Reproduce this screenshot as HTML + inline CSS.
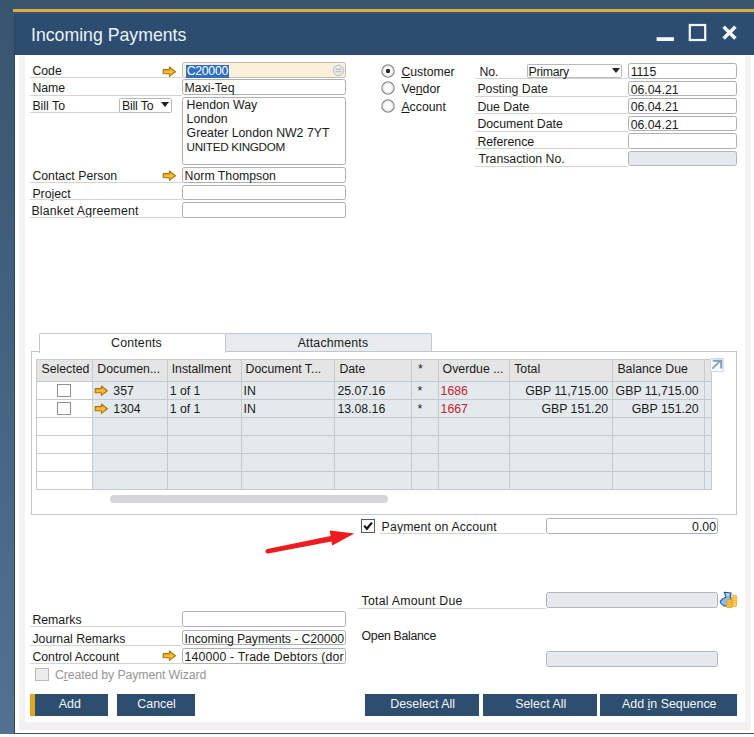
<!DOCTYPE html>
<html lang="en">
<head>
<meta charset="utf-8">
<title>Incoming Payments</title>
<style>
html,body{margin:0;padding:0;}
body{width:754px;height:737px;position:relative;overflow:hidden;background:#fff;
  font-family:"Liberation Sans","DejaVu Sans",sans-serif;font-size:12.3px;color:#1a1a1a;}
.abs,.lbl,.fld,.ul,.btn,.cell,.hd,.txt{position:absolute;box-sizing:border-box;white-space:nowrap;}
/* frame */
#topband{left:0;top:0;width:754px;height:15px;background:#39566f;}
#leftband{left:0;top:0;width:15px;height:734px;background:linear-gradient(#38556e 0px,#44637f 360px,#537292 734px);}
#leftline{left:14px;top:14px;width:1px;height:720px;background:#2e465c;}
#gold{left:13.4px;top:9.2px;width:741px;height:3.1px;background:#dcaa40;}
#title{left:14px;top:13.6px;width:740px;height:41px;background:#2d4d70;}
#titletxt{left:31px;top:24px;font-size:17.7px;line-height:22px;color:#edf2f8;}
#botline{left:14px;top:732.6px;width:740px;height:1.6px;background:#3a4f66;}
.band{background:#f3f3f4;}
/* generic */
.lbl{height:16px;line-height:16px;}
.ul{height:1px;background:#d4d4d4;}
.fld{border:1px solid #adb1b6;border-radius:2.5px;background:#fff;height:15.6px;line-height:14px;padding-left:1.5px;padding-top:.9px;}
.clip{overflow-x:clip;overflow-y:visible;}
.fld.dis{background:#e5e9ed;border-color:#b4b8bd;}
.btn{background:#2e4e70;color:#f2f5f9;text-align:center;height:21.5px;line-height:21.5px;top:694.2px;font-size:12.4px;padding-left:1.2px;}
u{text-decoration:underline;text-underline-offset:.6px;text-decoration-thickness:1px;}
.tri{position:absolute;width:0;height:0;border-left:4.5px solid transparent;border-right:4.5px solid transparent;border-top:5.4px solid #222;}
/* table */
.hd{background:#e5e5e5;height:22px;line-height:20px;top:359.2px;padding-left:4px;border-left:1px solid #c6cacf;overflow:hidden;}
.cell{background:#e4e9ee;height:18px;line-height:17px;padding-top:1px;border-left:1px solid #c6cacf;border-top:1px solid #c6cacf;padding-left:2px;overflow:hidden;}
.cell.w{background:#fff;}
.cell.r{text-align:right;padding-right:2px;padding-left:0;}
.red{color:#c9212b;}
.cb{position:absolute;box-sizing:border-box;width:13.4px;height:13px;border:1px solid #8e9296;background:#fff;}
.radio{position:absolute;box-sizing:border-box;width:13.6px;height:13.6px;border:1px solid #8c8c8c;border-radius:50%;background:#fff;}
</style>
</head>
<body>
<!-- window frame -->
<div class="abs" id="topband"></div>
<div class="abs" id="leftband"></div>
<div class="abs" id="title"></div>
<div class="abs" id="leftline"></div>
<div class="abs" id="gold"></div>
<div class="abs" id="titletxt">Incoming Payments</div>
<svg class="abs" style="left:650px;top:18px" width="95" height="30" viewBox="650 18 95 30">
  <rect x="656.6" y="37.2" width="17.4" height="3.8" fill="#f4f7fa"/>
  <rect x="689.8" y="25" width="15.4" height="15" fill="none" stroke="#f4f7fa" stroke-width="2.2"/>
  <path d="M723.6 26.8 L735.4 38.6 M735.4 26.8 L723.6 38.6" stroke="#f4f7fa" stroke-width="3.5" fill="none"/>
</svg>
<div class="abs band" style="left:19px;top:56px;width:6px;height:674px"></div>
<div class="abs band" style="left:745px;top:56px;width:6px;height:674px"></div>
<div class="abs band" style="left:19px;top:722.4px;width:732px;height:7.8px;background:#f1f1f3"></div>
<div class="abs" id="botline"></div>

<!-- BEGIN:topleft -->
<!-- top-left form -->
<div class="lbl" style="left:32.4px;top:63.4px">Code</div>
<div class="lbl" style="left:32.4px;top:79.6px">Name</div>
<div class="lbl" style="left:32.4px;top:97.8px">Bill To</div>
<div class="lbl" style="left:32.4px;top:167.9px">Contact Person</div>
<div class="lbl" style="left:32.4px;top:185.5px">Project</div>
<div class="lbl" style="left:31.4px;top:202.8px;letter-spacing:.2px">Blanket Agreement</div>
<div class="ul" style="left:30px;top:77.4px;width:152px"></div>
<div class="ul" style="left:30px;top:94.6px;width:152px"></div>
<div class="ul" style="left:30px;top:112px;width:90px"></div>
<div class="ul" style="left:30px;top:181.8px;width:152px"></div>
<div class="ul" style="left:30px;top:199.1px;width:152px"></div>
<div class="ul" style="left:30px;top:217px;width:152px"></div>
<svg class="abs" style="left:161.5px;top:65.5px" width="16" height="12" viewBox="0 0 16 12"><path d="M1.2 3.6H7.4V1L13.4 5.7L7.4 10.4V7.8H1.2Z" fill="#f7b92b" stroke="#a87616" stroke-width="1.1" stroke-linejoin="round"/></svg>
<svg class="abs" style="left:161.5px;top:169.5px" width="16" height="12" viewBox="0 0 16 12"><path d="M1.2 3.6H7.4V1L13.4 5.7L7.4 10.4V7.8H1.2Z" fill="#f7b92b" stroke="#a87616" stroke-width="1.1" stroke-linejoin="round"/></svg>
<div class="fld" style="left:182.1px;top:62px;width:163.7px;background:#fdf0da;border-color:#c2beb6;padding-left:3px"><span style="background:#2f6fc2;color:#fff;display:inline-block;height:13px;line-height:13.4px;padding:0 .6px;margin-top:-.2px;letter-spacing:-.3px">C20000</span></div>
<svg class="abs" style="left:332px;top:63.5px" width="13" height="13" viewBox="0 0 13 13"><circle cx="6.5" cy="6.5" r="5.3" fill="#e9e9ea" stroke="#b9bcc0" stroke-width="1"/><path d="M3.6 5.2H9.4M3.6 7.8H9.4" stroke="#b4b7bb" stroke-width="1.1"/></svg>
<div class="fld" style="left:182.1px;top:79.4px;width:163.7px">Maxi-Teq</div>
<div class="fld" style="left:119.4px;top:97.5px;width:52.4px;height:15.4px;border-radius:1.5px;letter-spacing:-.15px;border-color:#b6babf">Bill To</div>
<div class="tri" style="left:161px;top:102.4px"></div>
<div class="fld" style="left:182.2px;top:97.4px;width:163.6px;height:67.2px;line-height:14px;padding-left:3.4px;padding-top:0;white-space:pre">Hendon Way
London
Greater London NW2 7YT
<span style="font-size:11.7px;letter-spacing:-.3px">UNITED KINGDOM</span></div>
<div class="fld" style="left:182.1px;top:167.4px;width:163.7px">Norm Thompson</div>
<div class="fld" style="left:182.1px;top:184.6px;width:163.7px"></div>
<div class="fld" style="left:182.1px;top:202.2px;width:163.7px"></div>
<!-- END:topleft -->
<!-- BEGIN:topright -->
<!-- top-right form -->
<svg class="abs" style="left:381px;top:64.2px" width="14" height="14" viewBox="0 0 14 14"><circle cx="7" cy="7" r="6.1" fill="#fcfcfc" stroke="#8e8e8e" stroke-width="1.35"/><circle cx="7" cy="7" r="4.9" fill="none" stroke="#e3e3e3" stroke-width="1"/><circle cx="7" cy="7" r="2.2" fill="#2a2a2a"/></svg>
<svg class="abs" style="left:381px;top:81.4px" width="14" height="14" viewBox="0 0 14 14"><circle cx="7" cy="7" r="6.1" fill="#fcfcfc" stroke="#8e8e8e" stroke-width="1.35"/><circle cx="7" cy="7" r="4.9" fill="none" stroke="#e3e3e3" stroke-width="1"/></svg>
<svg class="abs" style="left:381px;top:99px" width="14" height="14" viewBox="0 0 14 14"><circle cx="7" cy="7" r="6.1" fill="#fcfcfc" stroke="#8e8e8e" stroke-width="1.35"/><circle cx="7" cy="7" r="4.9" fill="none" stroke="#e3e3e3" stroke-width="1"/></svg>
<div class="lbl" style="left:401.4px;top:63.6px"><u>C</u>ustomer</div>
<div class="lbl" style="left:401.4px;top:80.8px">Ve<u>n</u>dor</div>
<div class="lbl" style="left:401.4px;top:98.6px"><u>A</u>ccount</div>
<div class="lbl" style="left:479.4px;top:63.8px">No.</div>
<div class="lbl" style="left:477.4px;top:81.2px">Posting Date</div>
<div class="lbl" style="left:477.4px;top:98.8px">Due Date</div>
<div class="lbl" style="left:477.4px;top:116.2px">Document Date</div>
<div class="lbl" style="left:477.4px;top:133.8px">Reference</div>
<div class="lbl" style="left:478.4px;top:151.2px">Transaction No.</div>
<div class="ul" style="left:475px;top:78.3px;width:153px"></div>
<div class="ul" style="left:475px;top:95.6px;width:153px"></div>
<div class="ul" style="left:475px;top:113.3px;width:153px"></div>
<div class="ul" style="left:475px;top:130.6px;width:153px"></div>
<div class="ul" style="left:475px;top:148.1px;width:153px"></div>
<div class="ul" style="left:475px;top:165.8px;width:153px"></div>
<div class="fld" style="left:526.6px;top:63.8px;width:95.8px;height:14.6px;border-radius:1.5px;padding-top:.2px;padding-left:1px;letter-spacing:-.3px;border-color:#b6babf">Primary</div>
<div class="tri" style="left:611.6px;top:68.2px"></div>
<div class="fld" style="left:628.2px;top:63.4px;width:109px">1115</div>
<div class="fld" style="left:628.2px;top:80.8px;width:109px">06.04.21</div>
<div class="fld" style="left:628.2px;top:98.4px;width:109px">06.04.21</div>
<div class="fld" style="left:628.2px;top:115.8px;width:109px">06.04.21</div>
<div class="fld" style="left:628.2px;top:133.2px;width:109px"></div>
<div class="fld dis" style="left:628.2px;top:150.6px;width:109px"></div>
<!-- END:topright -->
<!-- BEGIN:tabs -->
<!-- tabs + matrix -->
<div class="abs" style="left:225px;top:332.6px;width:207px;height:19.4px;background:#e7ebef;border:1px solid #c3c7cc;border-bottom:none;border-radius:2px 2px 0 0"></div>
<div class="abs" style="left:30.6px;top:351.3px;width:706.6px;height:163.6px;border:1px solid #c3c7cc;background:#fff"></div>
<div class="abs" style="left:39px;top:332.6px;width:186.6px;height:20px;background:#fff;border:1px solid #c3c7cc;border-bottom:none;border-radius:2px 2px 0 0"></div>
<div class="txt" style="left:43.5px;top:334.6px;width:186px;text-align:center;line-height:16px;letter-spacing:.2px">Contents</div>
<div class="txt" style="left:229.5px;top:334.6px;width:207px;text-align:center;line-height:16px;letter-spacing:.2px">Attachments</div>
<div class="hd" style="left:35.9px;width:56.4px;padding-left:4.6px">Selected</div>
<div class="hd" style="left:92.3px;width:74.4px">Documen...</div>
<div class="hd" style="left:166.7px;width:73.9px">Installment</div>
<div class="hd" style="left:240.6px;width:93.8px">Document T...</div>
<div class="hd" style="left:334.4px;width:77.0px">Date</div>
<div class="hd" style="left:411.4px;width:26.2px;padding-left:5.6px">*</div>
<div class="hd" style="left:437.6px;width:71.6px">Overdue ...</div>
<div class="hd" style="left:509.2px;width:103.2px">Total</div>
<div class="hd" style="left:612.4px;width:91.2px">Balance Due</div>
<div class="hd" style="left:703.6px;width:7.8px"></div>
<div class="abs" style="left:35.9px;top:359.2px;width:676.5px;height:1px;background:#c6cacf"></div>
<div class="cell w" style="left:35.9px;top:381.1px;width:56.4px;height:18.7px"></div>
<div class="cell" style="left:92.3px;top:381.1px;width:74.4px;height:18.7px;padding-left:20px">357</div>
<div class="cell" style="left:166.7px;top:381.1px;width:73.9px;height:18.7px">1 of 1</div>
<div class="cell" style="left:240.6px;top:381.1px;width:93.8px;height:18.7px">IN</div>
<div class="cell" style="left:334.4px;top:381.1px;width:77.0px;height:18.7px">25.07.16</div>
<div class="cell" style="left:411.4px;top:381.1px;width:26.2px;height:18.7px;padding-left:5px">*</div>
<div class="cell red" style="left:437.6px;top:381.1px;width:71.6px;height:18.7px">1686</div>
<div class="cell r" style="left:509.2px;top:381.1px;width:103.2px;height:18.7px;padding-right:4.2px">GBP 11,715.00</div>
<div class="cell r" style="left:612.4px;top:381.1px;width:91.2px;height:18.7px;padding-right:5.0px">GBP 11,715.00</div>
<div class="cell" style="left:703.6px;top:381.1px;width:7.8px;height:18.7px"></div>
<div class="cell w" style="left:35.9px;top:399.3px;width:56.4px;height:18.4px"></div>
<div class="cell" style="left:92.3px;top:399.3px;width:74.4px;height:18.4px;padding-left:20px">1304</div>
<div class="cell" style="left:166.7px;top:399.3px;width:73.9px;height:18.4px">1 of 1</div>
<div class="cell" style="left:240.6px;top:399.3px;width:93.8px;height:18.4px">IN</div>
<div class="cell" style="left:334.4px;top:399.3px;width:77.0px;height:18.4px">13.08.16</div>
<div class="cell" style="left:411.4px;top:399.3px;width:26.2px;height:18.4px;padding-left:5px">*</div>
<div class="cell red" style="left:437.6px;top:399.3px;width:71.6px;height:18.4px">1667</div>
<div class="cell r" style="left:509.2px;top:399.3px;width:103.2px;height:18.4px;padding-right:4.2px">GBP 151.20</div>
<div class="cell r" style="left:612.4px;top:399.3px;width:91.2px;height:18.4px;padding-right:5.0px">GBP 151.20</div>
<div class="cell" style="left:703.6px;top:399.3px;width:7.8px;height:18.4px"></div>
<div class="cell w" style="left:35.9px;top:417.2px;width:56.4px;height:18.6px"></div>
<div class="cell" style="left:92.3px;top:417.2px;width:74.4px;height:18.6px"></div>
<div class="cell" style="left:166.7px;top:417.2px;width:73.9px;height:18.6px"></div>
<div class="cell" style="left:240.6px;top:417.2px;width:93.8px;height:18.6px"></div>
<div class="cell" style="left:334.4px;top:417.2px;width:77.0px;height:18.6px"></div>
<div class="cell" style="left:411.4px;top:417.2px;width:26.2px;height:18.6px"></div>
<div class="cell" style="left:437.6px;top:417.2px;width:71.6px;height:18.6px"></div>
<div class="cell" style="left:509.2px;top:417.2px;width:103.2px;height:18.6px"></div>
<div class="cell" style="left:612.4px;top:417.2px;width:91.2px;height:18.6px"></div>
<div class="cell" style="left:703.6px;top:417.2px;width:7.8px;height:18.6px"></div>
<div class="cell w" style="left:35.9px;top:435.3px;width:56.4px;height:18.4px"></div>
<div class="cell" style="left:92.3px;top:435.3px;width:74.4px;height:18.4px"></div>
<div class="cell" style="left:166.7px;top:435.3px;width:73.9px;height:18.4px"></div>
<div class="cell" style="left:240.6px;top:435.3px;width:93.8px;height:18.4px"></div>
<div class="cell" style="left:334.4px;top:435.3px;width:77.0px;height:18.4px"></div>
<div class="cell" style="left:411.4px;top:435.3px;width:26.2px;height:18.4px"></div>
<div class="cell" style="left:437.6px;top:435.3px;width:71.6px;height:18.4px"></div>
<div class="cell" style="left:509.2px;top:435.3px;width:103.2px;height:18.4px"></div>
<div class="cell" style="left:612.4px;top:435.3px;width:91.2px;height:18.4px"></div>
<div class="cell" style="left:703.6px;top:435.3px;width:7.8px;height:18.4px"></div>
<div class="cell w" style="left:35.9px;top:453.2px;width:56.4px;height:18.5px"></div>
<div class="cell" style="left:92.3px;top:453.2px;width:74.4px;height:18.5px"></div>
<div class="cell" style="left:166.7px;top:453.2px;width:73.9px;height:18.5px"></div>
<div class="cell" style="left:240.6px;top:453.2px;width:93.8px;height:18.5px"></div>
<div class="cell" style="left:334.4px;top:453.2px;width:77.0px;height:18.5px"></div>
<div class="cell" style="left:411.4px;top:453.2px;width:26.2px;height:18.5px"></div>
<div class="cell" style="left:437.6px;top:453.2px;width:71.6px;height:18.5px"></div>
<div class="cell" style="left:509.2px;top:453.2px;width:103.2px;height:18.5px"></div>
<div class="cell" style="left:612.4px;top:453.2px;width:91.2px;height:18.5px"></div>
<div class="cell" style="left:703.6px;top:453.2px;width:7.8px;height:18.5px"></div>
<div class="cell w" style="left:35.9px;top:471.2px;width:56.4px;height:18.5px"></div>
<div class="cell" style="left:92.3px;top:471.2px;width:74.4px;height:18.5px"></div>
<div class="cell" style="left:166.7px;top:471.2px;width:73.9px;height:18.5px"></div>
<div class="cell" style="left:240.6px;top:471.2px;width:93.8px;height:18.5px"></div>
<div class="cell" style="left:334.4px;top:471.2px;width:77.0px;height:18.5px"></div>
<div class="cell" style="left:411.4px;top:471.2px;width:26.2px;height:18.5px"></div>
<div class="cell" style="left:437.6px;top:471.2px;width:71.6px;height:18.5px"></div>
<div class="cell" style="left:509.2px;top:471.2px;width:103.2px;height:18.5px"></div>
<div class="cell" style="left:612.4px;top:471.2px;width:91.2px;height:18.5px"></div>
<div class="cell" style="left:703.6px;top:471.2px;width:7.8px;height:18.5px"></div>
<div class="abs" style="left:35.9px;top:489.2px;width:676.5px;height:1px;background:#c6cacf"></div>
<div class="abs" style="left:711.4px;top:359.2px;width:1px;height:131px;background:#c6cacf"></div>
<div class="cb" style="left:57.2px;top:383.6px"></div>
<div class="cb" style="left:57.2px;top:401.8px"></div>
<svg class="abs" style="left:93.6px;top:384.6px" width="16" height="12" viewBox="0 0 16 12"><path d="M1.2 3.6H7.4V1L13.4 5.7L7.4 10.4V7.8H1.2Z" fill="#f7b92b" stroke="#a87616" stroke-width="1.1" stroke-linejoin="round"/></svg>
<svg class="abs" style="left:93.6px;top:402.8px" width="16" height="12" viewBox="0 0 16 12"><path d="M1.2 3.6H7.4V1L13.4 5.7L7.4 10.4V7.8H1.2Z" fill="#f7b92b" stroke="#a87616" stroke-width="1.1" stroke-linejoin="round"/></svg>
<div class="abs" style="left:110.3px;top:495px;width:278px;height:8.4px;border-radius:4.2px;background:#d6d6d8"></div>
<svg class="abs" style="left:710.2px;top:358px" width="14" height="14" viewBox="0 0 14 14"><rect x="0.5" y="0.5" width="12.8" height="13" fill="#f8fbfd" stroke="#ced8e2" stroke-width="1"/><path d="M2.4 10.6L9.6 3.4" fill="none" stroke="#7e9cbe" stroke-width="1.7"/><path d="M2.8 2.7H11.2V10.6" fill="none" stroke="#7e9cbe" stroke-width="2"/></svg>
<!-- END:tabs -->
<!-- BEGIN:bottom -->
<!-- bottom area -->
<div class="cb" style="left:361px;top:519.2px;width:13.8px;height:13.6px;border-color:#55595d"></div>
<svg class="abs" style="left:361px;top:519.4px" width="14" height="14" viewBox="0 0 14 14"><path d="M3.2 6.6L5.9 9.8L10.9 3.6" fill="none" stroke="#111" stroke-width="2.2"/></svg>
<div class="lbl" style="left:381.6px;top:519.2px;letter-spacing:.13px">Payment on Account</div>
<div class="ul" style="left:380px;top:533px;width:166px"></div>
<div class="fld" style="left:546.2px;top:518.4px;width:171.8px;height:15.4px;text-align:right;padding-right:1px">0.00</div>
<svg class="abs" style="left:255px;top:520px" width="110" height="40" viewBox="255 520 110 40"><path d="M267.2 549 L330.6 536 L329.6 530.6 L354.4 533.4 L332.2 545.4 L331.4 541.6 L268.2 553.4 A2.25 2.25 0 0 1 267.2 549Z" fill="#ec1c1f"/></svg>
<div class="lbl" style="left:361.6px;top:593.4px;letter-spacing:.25px">Total Amount Due</div>
<div class="ul" style="left:358px;top:608px;width:188px"></div>
<div class="fld dis" style="left:546.2px;top:592.2px;width:171.8px;height:16px"></div>
<svg class="abs" style="left:719px;top:590px" width="20" height="20" viewBox="0 0 20 20">
  <path d="M5.2 2.2L12.2 3L11 6.8L12.4 9V16H5.2Q1 13.6 1.2 11.4Q3 8.4 7.2 7Z" fill="#8bbcf0" stroke="#24528f" stroke-width="1.1" stroke-linejoin="round"/>
  <path d="M6.6 3.2L10.8 3.8L9.6 6.4L8 6.2Z" fill="#b9d8f7"/>
  <rect x="12.8" y="5.2" width="4.8" height="11.4" rx="1.2" fill="#f8d060" stroke="#e0a728" stroke-width=".8"/>
  <path d="M13 8H17.4M13 10.4H17.4M13 12.8H17.4" stroke="#e9b43a" stroke-width=".7"/>
  <rect x="7.6" y="9.6" width="5.6" height="8" rx="1.2" fill="#f6c343" stroke="#d9991c" stroke-width=".8"/>
  <path d="M7.8 12.2H13M7.8 14.8H13" stroke="#e0a52a" stroke-width=".7"/>
</svg>
<div class="lbl" style="left:361.6px;top:627.6px;letter-spacing:-.3px">Open Balance</div>
<div class="fld dis" style="left:546.2px;top:651.2px;width:171.8px;height:16px"></div>

<div class="lbl" style="left:32.4px;top:612.2px">Remarks</div>
<div class="lbl" style="left:32.4px;top:630.6px">Journal Remarks</div>
<div class="lbl" style="left:32.4px;top:648.8px">Control Account</div>
<div class="ul" style="left:30px;top:626.4px;width:152px"></div>
<div class="ul" style="left:30px;top:645px;width:152px"></div>
<div class="ul" style="left:30px;top:663px;width:152px"></div>
<div class="fld" style="left:182.1px;top:611.4px;width:163.7px"></div>
<div class="fld clip" style="left:182.1px;top:629.8px;width:163.7px;letter-spacing:-.1px">Incoming Payments - C20000</div>
<div class="fld clip" style="left:182.1px;top:648px;width:163.7px;letter-spacing:.15px">140000 - Trade Debtors (dor</div>
<svg class="abs" style="left:161.5px;top:650px" width="16" height="12" viewBox="0 0 16 12"><path d="M1.2 3.6H7.4V1L13.4 5.7L7.4 10.4V7.8H1.2Z" fill="#f7b92b" stroke="#a87616" stroke-width="1.1" stroke-linejoin="round"/></svg>
<div class="cb" style="left:35.4px;top:668px;width:13.4px;height:13.4px;background:#ececec;border-color:#b9b9b9"></div>
<div class="lbl" style="left:55px;top:666.8px;color:#969696;letter-spacing:-.1px">C<u>r</u>eated by Payment Wizard</div>

<div class="btn" style="left:30.2px;width:78px;box-shadow:inset 5px 0 0 #e2a71f">Add</div>
<div class="btn" style="left:117px;width:78px">Cancel</div>
<div class="btn" style="left:364.8px;width:114.4px">Deselect All</div>
<div class="btn" style="left:483.2px;width:113.8px">Select All</div>
<div class="btn" style="left:600.4px;width:136.6px">Add <u>i</u>n Sequence</div>
<!-- END:bottom -->
</body>
</html>
